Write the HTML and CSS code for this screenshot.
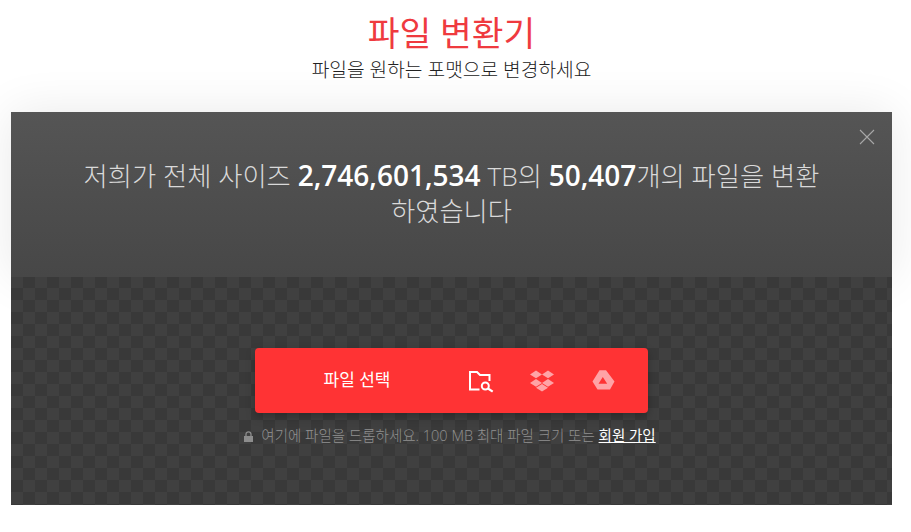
FILE: index.html
```html
<!DOCTYPE html>
<html lang="ko">
<head>
<meta charset="utf-8">
<title>파일 변환기</title>
<link rel="stylesheet" href="styles.css">
</head>
<body>
<header class="head">
  <h1 class="title">파일 변환기</h1>
  <p class="subtitle">파일을 원하는 포맷으로 변경하세요</p>
</header>
<main class="panel">
  <section class="banner">
    <button class="close" aria-label="닫기">
      <svg width="16" height="16" viewBox="0 0 16 16"><path d="M1 1l14 14M15 1L1 15" stroke="#a8a8a8" stroke-width="1.1" fill="none"/></svg>
    </button>
    <p class="stats">저희가 전체 사이즈 <b>2,746,601,534</b> TB의 <b>50,407</b>개의 파일을 변환 하였습니다</p>
  </section>
  <section class="drop">
    <div class="picker">
      <span class="picker-label">파일 선택</span>
      <span class="picker-icons">
        <svg class="ico" width="24" height="22" viewBox="0 0 24 22"><path d="M11.500 19.500H2V2h7l3 3h9.500v6" fill="none" stroke="#fff" stroke-width="2"/><circle cx="17.300" cy="16" r="3.500" fill="none" stroke="#fff" stroke-width="2"/><path d="M20 18.500l4.700 3.200" stroke="#fff" stroke-width="2.200" fill="none"/></svg>
        <svg class="ico" width="26" height="22" viewBox="0 0 26 22"><path fill="#ffa3a6" d="M7 .5l6 3.900-6 3.900-6-3.900zM19 .5l6 3.900-6 3.900-6-3.900zM7 9l6 3.900-6 3.900-6-3.900zM19 9l6 3.900-6 3.900-6-3.900zM13 14l6 3.800-6 3.800-6-3.800z"/></svg>
        <svg class="ico" width="24" height="22" viewBox="0 0 24 22"><path fill="#ffa3a6" fill-rule="evenodd" d="M7.500.3h6.500l8.500 11.200L18 19.500H5.500L.5 11.500zM10.800 7L6.500 13.700h8.700z"/></svg>
      </span>
    </div>
    <p class="hint">
      <svg class="lock" width="9" height="11" viewBox="0 0 9 11"><path fill="#8d8d8d" d="M0 5h9v6H0z"/><path fill="none" stroke="#8d8d8d" stroke-width="1.300" d="M2 5V3.300a2.500 2.500 0 0 1 5 0V5"/></svg>
      <span>여기에 파일을 드롭하세요. 100 MB 최대 파일 크기 또는 <a href="#" class="signup">회원 가입</a></span>
    </p>
  </section>
</main>
</body>
</html>
```
FILE: styles.css
```css
* { box-sizing: border-box; }
html { height: 532px; overflow: hidden; background: #fff; }
body { margin: 0; font-family: "Open Sans", "Noto Sans CJK KR", sans-serif; color: #333; }
.head { height: 112px; padding: 10px 8px 0 0; text-align: center; }
.title { margin: 0; font-size: 34.500px; line-height: 46px; font-weight: 400; color: #ef3a3f; }
.subtitle { margin: 1px 0 0; font-size: 19.200px; line-height: 26px; font-weight: 300; color: #222; }
.panel { width: 881px; height: 393px; margin-left: 11px; display: flex; flex-direction: column; }
.banner { position: relative; height: 165px; padding: 46px 60px 0; background: linear-gradient(#555, #474747); text-align: center; box-shadow: 0 0 45px rgba(0,0,0,.09); }
.close { position: absolute; top: 17px; right: 17px; width: 16px; height: 16px; padding: 0; border: 0; background: none; line-height: 0; }
.stats { margin: 0; font-size: 26.300px; line-height: 35px; color: #d9d9d9; font-weight: 300; }
.stats b { color: #fff; font-weight: 600; font-size: 28px; }
.drop { position: relative; flex: 1; display: flex; flex-direction: column; align-items: center; padding-top: 71px; background-color: #3c3c3c; background-image: conic-gradient(#393939 25%, #404040 0 50%, #393939 0 75%, #404040 0); background-size: 24px 24px; background-position: 0 -1px; }
.picker { width: 393px; height: 65px; display: flex; align-items: center; background: #ff3334; border-radius: 4px; box-shadow: 0 4px 10px rgba(0,0,0,.25); }
.picker-label { width: 204px; text-align: center; color: #fff; font-size: 17px; font-weight: 400; line-height: 24px; margin-top: -2px; }
.picker-icons { display: flex; gap: 37px; padding-top: 1px; margin-left: 9px; }
.ico { overflow: visible; }
.hint { display: flex; align-items: center; gap: 8px; margin: 13px 0 0; padding-right: 3px; font-size: 14.500px; line-height: 20px; font-weight: 300; color: #909090; }
.signup { color: #fff; font-weight: 400; text-decoration: underline; }
```
